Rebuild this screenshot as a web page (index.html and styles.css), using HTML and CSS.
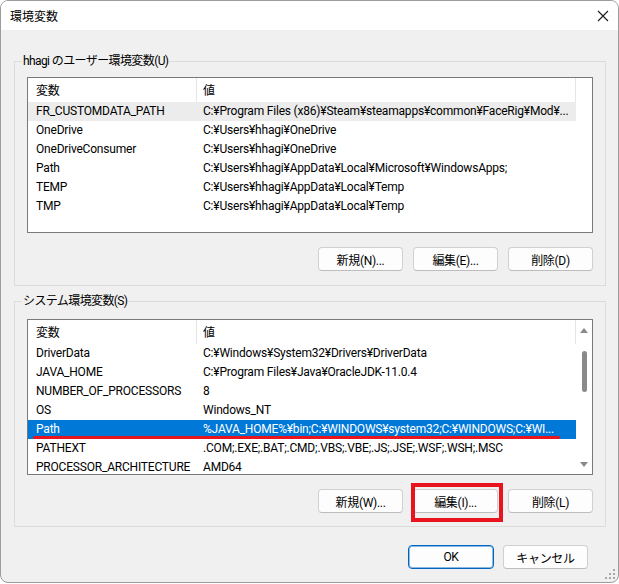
FILE: index.html
```html
<!DOCTYPE html>
<html lang="ja">

<head>
  <meta charset="UTF-8" />
  <meta name="viewport" content="width=device-width, initial-scale=1.0" />
  <title>環境変数</title>
  <link rel="stylesheet" href="styles.css">
</head>

<body>
  <div class="window">
    <div class="titlebar">
      <span class="title">環境変数</span>
      <svg class="close" width="12" height="12" viewBox="0 0 12 12">
        <path d="M1 1 L11 11 M11 1 L1 11" stroke="#1a1a1a" stroke-width="1.1" fill="none" />
      </svg>
    </div>

    <fieldset class="group user-group">
      <legend>hhagi のユーザー環境変数(U)</legend>
      <div class="list">
        <div class="list-body">
          <div class="row head">
            <div class="cell name">変数</div>
            <div class="cell value">値</div>
          </div>
          <div class="row hover">
            <div class="cell name">FR_CUSTOMDATA_PATH</div>
            <div class="cell value">C:¥Program Files (x86)¥Steam¥steamapps¥common¥FaceRig¥Mod¥...</div>
          </div>
          <div class="row">
            <div class="cell name">OneDrive</div>
            <div class="cell value">C:¥Users¥hhagi¥OneDrive</div>
          </div>
          <div class="row">
            <div class="cell name">OneDriveConsumer</div>
            <div class="cell value">C:¥Users¥hhagi¥OneDrive</div>
          </div>
          <div class="row">
            <div class="cell name">Path</div>
            <div class="cell value">C:¥Users¥hhagi¥AppData¥Local¥Microsoft¥WindowsApps;</div>
          </div>
          <div class="row">
            <div class="cell name">TEMP</div>
            <div class="cell value">C:¥Users¥hhagi¥AppData¥Local¥Temp</div>
          </div>
          <div class="row">
            <div class="cell name">TMP</div>
            <div class="cell value">C:¥Users¥hhagi¥AppData¥Local¥Temp</div>
          </div>
        </div>
      </div>
      <div class="buttons">
        <button class="btn">新規(N)...</button>
        <button class="btn">編集(E)...</button>
        <button class="btn">削除(D)</button>
      </div>
    </fieldset>

    <fieldset class="group system-group">
      <legend>システム環境変数(S)</legend>
      <div class="list">
        <div class="list-body">
          <div class="row head">
            <div class="cell name">変数</div>
            <div class="cell value">値</div>
          </div>
          <div class="row">
            <div class="cell name">DriverData</div>
            <div class="cell value">C:¥Windows¥System32¥Drivers¥DriverData</div>
          </div>
          <div class="row">
            <div class="cell name">JAVA_HOME</div>
            <div class="cell value">C:¥Program Files¥Java¥OracleJDK-11.0.4</div>
          </div>
          <div class="row">
            <div class="cell name">NUMBER_OF_PROCESSORS</div>
            <div class="cell value">8</div>
          </div>
          <div class="row">
            <div class="cell name">OS</div>
            <div class="cell value">Windows_NT</div>
          </div>
          <div class="row selected">
            <div class="cell name">Path</div>
            <div class="cell value">%JAVA_HOME%¥bin;C:¥WINDOWS¥system32;C:¥WINDOWS;C:¥WI...</div>
            <span class="mark-line"></span>
          </div>
          <div class="row">
            <div class="cell name">PATHEXT</div>
            <div class="cell value">.COM;.EXE;.BAT;.CMD;.VBS;.VBE;.JS;.JSE;.WSF;.WSH;.MSC</div>
          </div>
          <div class="row">
            <div class="cell name">PROCESSOR_ARCHITECTURE</div>
            <div class="cell value">AMD64</div>
          </div>
        </div>
        <div class="scrollbar">
          <svg width="8" height="5" viewBox="0 0 8 5"><path d="M0 5 L4 0 L8 5 Z" fill="#8a8a8a" /></svg>
          <div class="thumb"></div>
          <svg class="down" width="8" height="5" viewBox="0 0 8 5"><path d="M0 0 L4 5 L8 0 Z" fill="#8a8a8a" /></svg>
        </div>
      </div>
      <div class="buttons">
        <button class="btn">新規(W)...</button>
        <button class="btn marked">編集(I)...</button>
        <button class="btn">削除(L)</button>
      </div>
    </fieldset>

    <div class="dialog-buttons">
      <button class="btn default">OK</button>
      <button class="btn">キャンセル</button>
    </div>

    <svg class="grip" width="12" height="12" viewBox="0 0 12 12">
      <rect x="9" y="1" width="2" height="2" fill="#a8a8a8" />
      <rect x="5" y="5" width="2" height="2" fill="#a8a8a8" />
      <rect x="9" y="5" width="2" height="2" fill="#a8a8a8" />
      <rect x="1" y="9" width="2" height="2" fill="#a8a8a8" />
      <rect x="5" y="9" width="2" height="2" fill="#a8a8a8" />
      <rect x="9" y="9" width="2" height="2" fill="#a8a8a8" />
    </svg>
  </div>
</body>

</html>
```

FILE: styles.css
```css
*,
*::before,
*::after {
  box-sizing: border-box;
}

body {
  margin: 0;
  background: #ffffff;
  font-family: Roboto, "Noto Sans CJK JP", sans-serif;
  font-size: 12px;
  color: #000;
}

.window {
  position: relative;
  width: 619px;
  height: 583px;
  border: 1px solid #9c9c9c;
  border-radius: 8px;
  background: #f0f0f0;
  overflow: hidden;
}

.titlebar {
  height: 29px;
  background: #fff;
  display: flex;
  align-items: center;
  justify-content: space-between;
  padding: 0 9px 0 9px;
}

.title {
  font-family: "Noto Sans CJK JP", sans-serif;
  line-height: 16px;
}

.close {
  margin-top: 1px;
}

/* グループボックス */
.group {
  margin: 0 12px 0 13px;
  padding: 7px 12px 14px 12px;
  border: 1px solid #dcdcdc;
  min-width: 0;
}

.user-group {
  margin-top: 23px;
}

.system-group {
  margin-top: 7px;
  padding-top: 9px;
  padding-bottom: 13px;
}

legend {
  line-height: 17px;
  padding: 0 1px;
  margin-left: -5px;
  letter-spacing: -0.6px;
}

/* リストビュー */
.list {
  height: 156px;
  border: 1px solid #7a7a7a;
  background: #fff;
  display: flex;
  overflow: hidden;
}

.list-body {
  width: 548px;
  flex: none;
}

.row {
  position: relative;
  display: flex;
  height: 19px;
  line-height: 19px;
  letter-spacing: -0.2px;
}

.cell {
  white-space: nowrap;
  overflow: hidden;
  flex: none;
}

.cell.name {
  width: 169px;
  padding-left: 8px;
}

.cell.value {
  width: 379px;
  padding-left: 6px;
}

.row.head {
  height: 24px;
  line-height: 24px;
  font-family: "Noto Sans CJK JP", sans-serif;
}

.row.head .cell {
  border-right: 1px solid #e5e5e5;
}

.row.hover {
  background: #ececec;
}

.row.selected {
  background: #0078d7;
  color: #fff;
}

.mark-line {
  position: absolute;
  left: 5px;
  width: 527px;
  top: 16px;
  height: 3px;
  background: #e8141e;
  border-radius: 2px;
}

.scrollbar {
  flex: 1;
  display: flex;
  flex-direction: column;
  align-items: center;
  padding: 8px 0 7px 0;
}

.thumb {
  width: 5px;
  height: 41px;
  margin-top: 18px;
  background: #8a8a8a;
  border-radius: 3px;
}

.scrollbar .down {
  margin-top: auto;
}

/* ボタン */
.buttons {
  display: flex;
  justify-content: flex-end;
  gap: 10px;
  margin-top: 14px;
}

.btn {
  position: relative;
  width: 85px;
  height: 24px;
  padding: 0;
  background: #fdfdfd;
  border: 1px solid #d0d0d0;
  border-bottom-color: #bdbdbd;
  border-radius: 4px;
  font-family: Roboto, "Noto Sans CJK JP", sans-serif;
  font-size: 12px;
  letter-spacing: -0.3px;
  color: #000;
}

.btn.marked::after {
  content: "";
  position: absolute;
  left: -3px;
  top: -7px;
  width: 92px;
  height: 39px;
  border: 4px solid #e8141e;
}

.dialog-buttons {
  display: flex;
  justify-content: flex-end;
  gap: 9px;
  margin-top: 18px;
  padding-right: 30px;
}

.btn.default {
  width: 86px;
  border: 1px solid #0067c0;
  box-shadow: inset 0 0 0 1px rgba(0, 103, 192, 0.45);
}

.grip {
  position: absolute;
  right: 2px;
  bottom: 2px;
}
```
